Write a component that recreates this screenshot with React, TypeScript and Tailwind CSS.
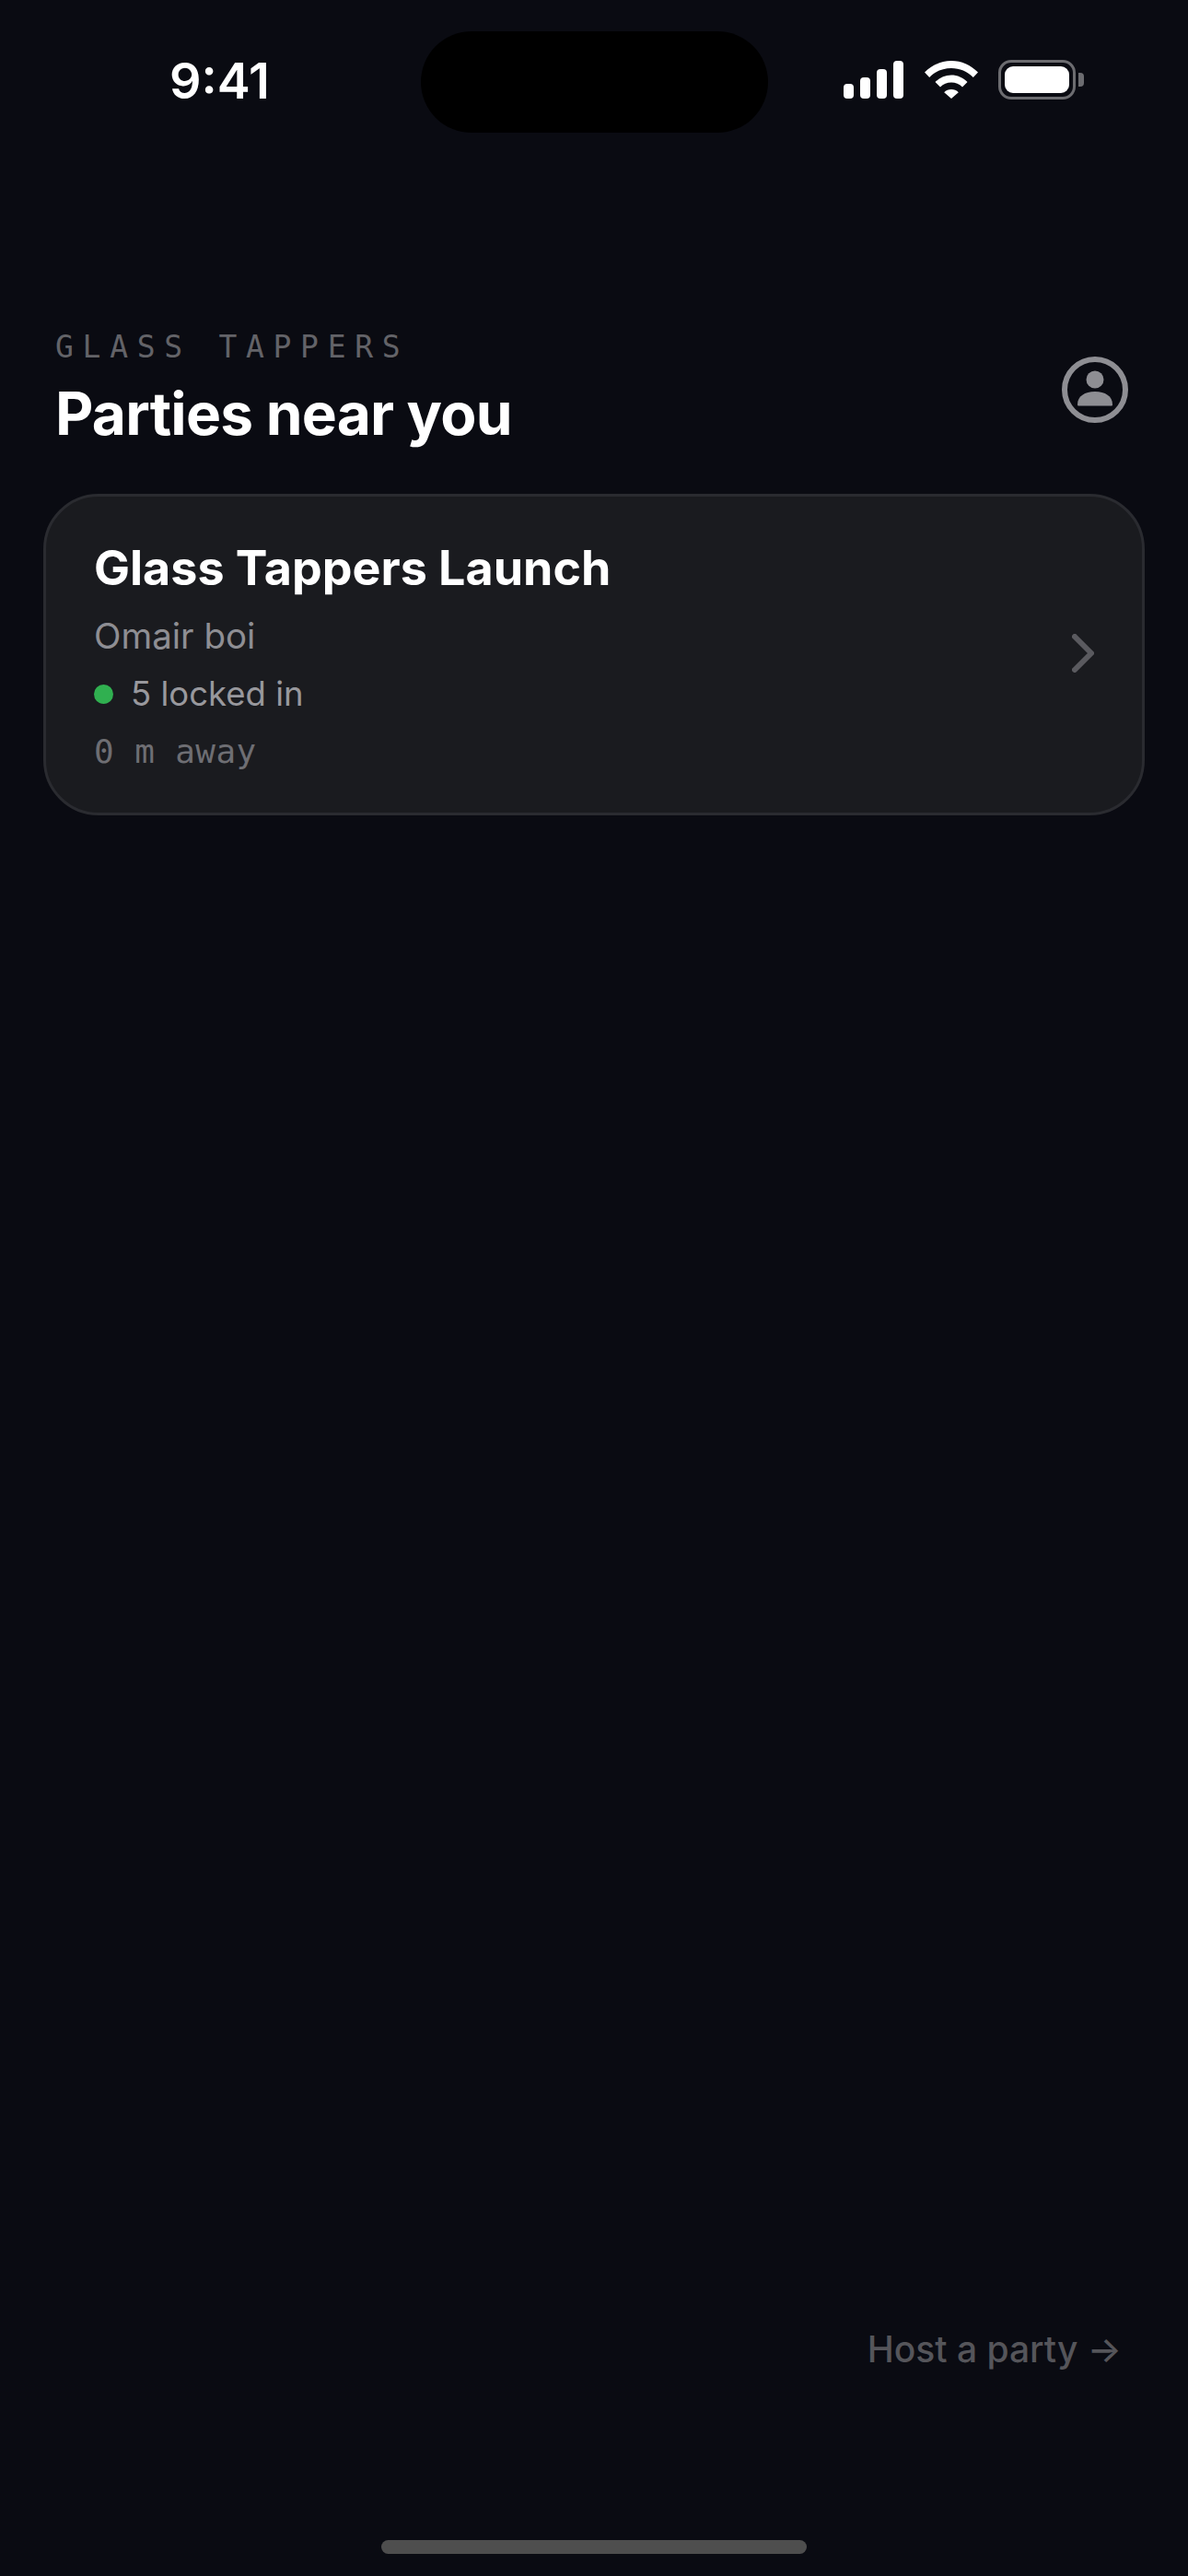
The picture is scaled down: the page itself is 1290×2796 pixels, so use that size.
import React from "react";

const StatusIcons = () => {
  return (
    <div className="flex items-center">
      <svg width="65" height="41" viewBox="0 0 65 41" fill="#fff">
        <rect x="0" y="25" width="11" height="16" rx="4" />
        <rect x="18" y="18" width="11" height="23" rx="4" />
        <rect x="36" y="9" width="11" height="32" rx="4" />
        <rect x="54" y="0" width="11" height="41" rx="4" />
      </svg>
      <svg className="ml-[23px]" width="58" height="41" viewBox="0 0 58 41" fill="#fff">
        <path d="M29 0C40 0 50 4.500 58 12.500L52.800 18C46.500 11.500 38 8 29 8C20 8 11.500 11.500 5.200 18L0 12.500C8 4.500 18 0 29 0Z" />
        <path d="M29 15.500C35.500 15.500 41.500 18 46.500 23L41 28.500C37.800 25.200 33.500 23.500 29 23.500C24.500 23.500 20.200 25.200 17 28.500L11.500 23C16.500 18 22.500 15.500 29 15.500Z" />
        <path d="M29 31C32 31 34.800 32.200 36.800 34.200L29 41L21.200 34.200C23.200 32.200 26 31 29 31Z" />
      </svg>
      <div className="ml-[22px] flex items-center">
        <div className="w-[84px] h-[43px] rounded-[14px] border-[3px] border-[#6c6c70] p-[4px]">
          <div className="w-full h-full rounded-[9px] bg-white" />
        </div>
        <div className="ml-[3px] w-[6px] h-[15px] rounded-r-[4px] bg-[#6c6c70]" />
      </div>
    </div>
  );
};

const App = () => {
  return (
    <div className="w-[1290px] h-[2796px] bg-[#0a0b12] flex flex-col font-['Inter',sans-serif] overflow-hidden">
      <div className="flex items-center h-[110px] mt-[34px]">
        <div className="w-[457px] pl-[184px] pb-[3px] text-white text-[54px] font-semibold leading-none">9:41</div>
        <div className="w-[377px] h-[110px] rounded-[55px] bg-black" />
        <div className="ml-[82px] pb-[5px]">
          <StatusIcons />
        </div>
      </div>

      <div className="flex items-start justify-between mt-[213px] pl-[60px] pr-[65px]">
        <div>
          <div className="font-['DejaVu_Sans_Mono',monospace] text-[33px] leading-[40px] text-[#636368] tracking-[9.700px] uppercase">
            Glass Tappers
          </div>
          <h1 className="text-[64px] leading-[80px] font-bold text-white mt-[12px] tracking-[-0.800px]">Parties near you</h1>
        </div>
        <svg className="mt-[30px]" width="72" height="72" viewBox="0 0 72 72" fill="#8e8e93">
          <circle cx="36" cy="36" r="33" fill="none" stroke="#8e8e93" strokeWidth="6" />
          <circle cx="36" cy="25" r="9.500" />
          <path d="M17 52C17 43 25 38 36 38C47 38 55 43 55 52C55 53 54.500 53.500 53.500 53.500H18.500C17.500 53.500 17 53 17 52Z" />
        </svg>
      </div>

      <div className="mt-[47px] mx-[47px] h-[349px] rounded-[60px] border-[3px] border-[#2a2b30] bg-[#1a1b1f] flex items-center justify-between pl-[52px] pr-[52px]">
        <div className="flex flex-col pt-[2px]">
          <div className="text-[52px] leading-[64px] font-bold text-white">Glass Tappers Launch</div>
          <div className="text-[38.500px] leading-[48px] text-[#8e8e93] mt-[17px]">Omair boi</div>
          <div className="flex items-center mt-[15px]">
            <span className="w-[21px] h-[21px] rounded-full bg-[#30b050]" />
            <span className="ml-[19px] text-[36.500px] leading-[48px] text-[#98989d]">5 locked in</span>
          </div>
          <div className="font-['DejaVu_Sans_Mono',monospace] text-[36px] leading-[44px] text-[#6e6e73] mt-[17px] tracking-[0.400px]">0 m away</div>
        </div>
        <svg className="mb-[3px]" width="24" height="42" viewBox="0 0 24 42" fill="none" stroke="#5a5a5f" strokeWidth="6" strokeLinecap="round" strokeLinejoin="round">
          <path d="M3 3L21 21L3 39" />
        </svg>
      </div>

      <div className="flex-1" />

      <div className="flex items-center justify-end pr-[72px] text-[39px] leading-[48px] font-medium text-[#55555a]">
        Host a party →
      </div>

      <div className="mt-[183px] mb-[24px] mx-auto w-[462px] h-[15px] rounded-full bg-[#4e4e4e]" />
    </div>
  );
};

export default App;
